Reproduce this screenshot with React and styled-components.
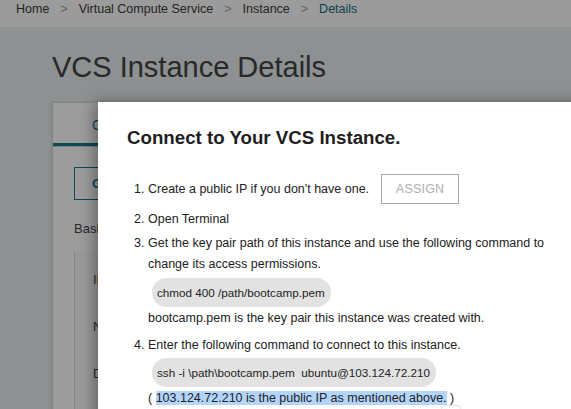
import React from 'react';
import styled, { createGlobalStyle } from 'styled-components';

const GlobalStyle = createGlobalStyle`
  html, body {
    margin: 0;
    padding: 0;
    overflow: hidden;
  }
  body {
    font-family: "Liberation Sans", Arial, sans-serif;
    background: #e6edee;
  }
`;

// Page behind the dialog
const Page = styled.div`
  position: relative;
  width: 571px;
  height: 409px;
  overflow: hidden;
  background: #e6edee;
`;

const Breadcrumb = styled.nav`
  height: 27px;
  box-sizing: border-box;
  background: #fdfdfd;
  display: flex;
  align-items: flex-start;
  gap: 11px;
  padding: 2px 0 0 16px;
  font-size: 12.5px;
  line-height: 15px;
  color: #3a3a3a;
`;

const Crumb = styled.span`
  color: ${(p) => (p.$active ? '#0f6f7c' : '#3a3a3a')};
`;

const Sep = styled.span`
  color: #a0a0a0;
`;

const Main = styled.div`
  padding: 23px 0 0 52px;
`;

const Title = styled.h1`
  margin: 0 0 18px;
  font-size: 29px;
  font-weight: 400;
  color: #444;
  line-height: 34px;
`;

const Card = styled.div`
  background: #fff;
  border: 1px solid #d6d6d6;
  height: 320px;
  box-shadow: 0 1px 4px rgba(0, 0, 0, 0.12);
`;

const Tabs = styled.div`
  height: 43px;
  border-bottom: 1px solid #cfcfcf;
  display: flex;
`;

const Tab = styled.div`
  box-sizing: border-box;
  height: 43px;
  width: 46px;
  padding: 14px 0 0 39px;
  overflow: hidden;
  white-space: nowrap;
  color: #137b88;
  font-size: 14px;
  border-bottom: 3px solid #137b88;
`;

const CardBody = styled.div`
  padding: 20px 0 0 21px;
`;

const OutlineButton = styled.div`
  box-sizing: border-box;
  width: 120px;
  height: 33px;
  border: 1px solid #137b88;
  display: flex;
  align-items: center;
  padding-left: 17px;
  color: #137b88;
  font-weight: 700;
  font-size: 13px;
`;

const Label = styled.div`
  margin-top: 21px;
  font-size: 13px;
  line-height: 15px;
  color: #444;
`;

const InfoTable = styled.div`
  margin-top: 16px;
  border-left: 1px solid #d6d6d6;
  background: #fbfbfb;
  height: 200px;
  padding: 20px 0 0 18px;
  display: grid;
  grid-template-columns: 42px 1fr;
  grid-auto-rows: 15px;
  row-gap: 32px;
  font-size: 13px;
  line-height: 15px;
  color: #444;
`;

const Overlay = styled.div`
  position: absolute;
  inset: 0;
  background: rgba(0, 0, 0, 0.39);
`;

// Dialog
const Modal = styled.div`
  position: absolute;
  left: 98px;
  top: 102px;
  width: 520px;
  height: 340px;
  background: #fff;
  box-shadow: -4px 0 14px rgba(0, 0, 0, 0.35);
  padding: 23px 0 0 29px;
  box-sizing: border-box;
  color: #222;
`;

const ModalTitle = styled.h2`
  margin: 0 0 23px;
  font-size: 18.7px;
  font-weight: 700;
  line-height: 26px;
  color: #1e1e1e;
`;

const Steps = styled.ol`
  list-style: none;
  margin: 0;
  padding: 0 0 0 7px;
  width: 414px;
  font-size: 12.5px;
  line-height: 21px;
`;

const Step = styled.li`
  display: grid;
  grid-template-columns: 14px 1fr;
  margin-bottom: ${(p) => p.$gap ?? 3}px;
`;

const Num = styled.span`
  line-height: ${(p) => (p.$tall ? '30px' : '21px')};
`;

const Row = styled.div`
  display: flex;
  align-items: center;
  gap: 12px;
`;

const AssignButton = styled.button`
  box-sizing: border-box;
  height: 30px;
  width: 78px;
  border: 1px solid #a9a9a9;
  background: #fff;
  color: #b0b0b0;
  font-family: "Liberation Sans", Arial, sans-serif;
  font-size: 12.5px;
  letter-spacing: 0.2px;
  padding: 0;
`;

const Pill = styled.div`
  width: fit-content;
  background: #e2e2e2;
  border-radius: 15px;
  height: 29px;
  line-height: 29px;
  padding: 0 6px 0 5px;
  margin: ${(p) => p.$margin || '3px 0 1px'} 4px;
  font-size: 11.7px;
  white-space: pre;
`;

const Highlight = styled.span`
  background: #b4d5fb;
`;

const Tip = styled.div`
  position: absolute;
  left: 343px;
  top: 303px;
  width: 18px;
  height: 12px;
  border: 1px solid #e2e2e2;
  border-radius: 4px;
  background: #fff;
`;

export default function App() {
  return (
    <>
      <GlobalStyle />
      <Page>
        <Breadcrumb>
          <Crumb>Home</Crumb>
          <Sep>&gt;</Sep>
          <Crumb>Virtual Compute Service</Crumb>
          <Sep>&gt;</Sep>
          <Crumb>Instance</Crumb>
          <Sep>&gt;</Sep>
          <Crumb $active>Details</Crumb>
        </Breadcrumb>
        <Main>
          <Title>VCS Instance Details</Title>
          <Card>
            <Tabs>
              <Tab>Connect</Tab>
            </Tabs>
            <CardBody>
              <OutlineButton>GET</OutlineButton>
              <Label>Basic</Label>
              <InfoTable>
                <div>ID</div>
                <div />
                <div>Name</div>
                <div />
                <div>Description</div>
                <div />
              </InfoTable>
            </CardBody>
          </Card>
        </Main>
        <Overlay />
        <Modal>
          <ModalTitle>Connect to Your VCS Instance.</ModalTitle>
          <Steps>
            <Step $gap={5}>
              <Num $tall>1.</Num>
              <Row>
                <span>Create a public IP if you don't have one.</span>
                <AssignButton>ASSIGN</AssignButton>
              </Row>
            </Step>
            <Step $gap={3}>
              <Num>2.</Num>
              <span>Open Terminal</span>
            </Step>
            <Step $gap={6}>
              <Num>3.</Num>
              <div>
                Get the key pair path of this instance and use the following command to
                change its access permissions.
                <Pill $margin="3px 0 1px">chmod 400 /path/bootcamp.pem</Pill>
                <div>bootcamp.pem is the key pair this instance was created with.</div>
              </div>
            </Step>
            <Step>
              <Num>4.</Num>
              <div>
                Enter the following command to connect to this instance.
                <Pill $margin="2px 0 1px">ssh -i \path\bootcamp.pem  ubuntu@103.124.72.210</Pill>
                <div>
                  ( <Highlight>103.124.72.210 is the public IP as mentioned above.</Highlight> )
                </div>
              </div>
            </Step>
          </Steps>
          <Tip />
        </Modal>
      </Page>
    </>
  );
}
